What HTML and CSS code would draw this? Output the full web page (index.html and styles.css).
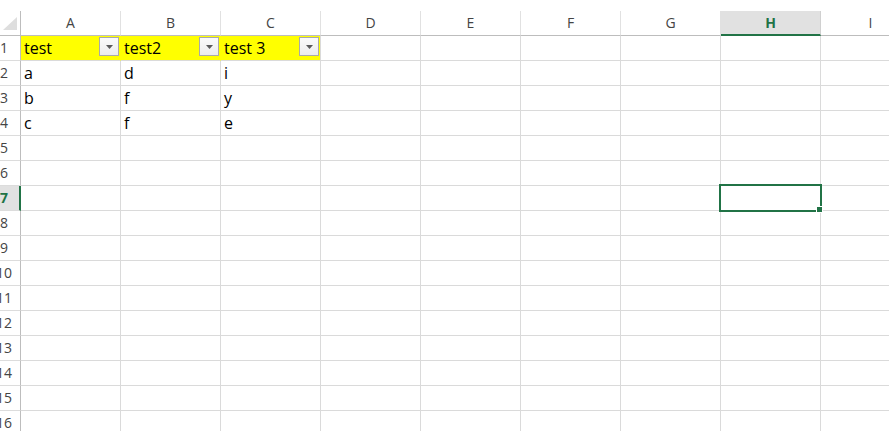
FILE: index.html
```html
<!DOCTYPE html>
<html>
<head>
<meta charset="utf-8">
<link rel="stylesheet" href="styles.css">
</head>
<body>
<div class="sheet">
  <div class="row head">
    <div class="rh corner"><svg width="20" height="24" viewBox="0 0 20 24"><polygon points="3,19 17,19 17,6" fill="#dedede"/></svg></div>
    <div class="ch">A</div><div class="ch">B</div><div class="ch">C</div><div class="ch">D</div><div class="ch">E</div><div class="ch">F</div><div class="ch">G</div><div class="ch sel">H</div><div class="ch">I</div>
  </div>
  <div class="row">
    <div class="rh"><span>1</span></div>
    <div class="c y f"><span class="t">test</span><span class="fb"><svg width="7" height="4" viewBox="0 0 7 4"><polygon points="0,0 7,0 3.5,4" fill="#5a5a5a"/></svg></span></div>
    <div class="c y f"><span class="t">test2</span><span class="fb"><svg width="7" height="4" viewBox="0 0 7 4"><polygon points="0,0 7,0 3.5,4" fill="#5a5a5a"/></svg></span></div>
    <div class="c y yl f"><span class="t">test 3</span><span class="fb"><svg width="7" height="4" viewBox="0 0 7 4"><polygon points="0,0 7,0 3.5,4" fill="#5a5a5a"/></svg></span></div>
    <div class="c"></div><div class="c"></div><div class="c"></div><div class="c"></div><div class="c"></div><div class="c"></div>
  </div>
  <div class="row">
    <div class="rh"><span>2</span></div>
    <div class="c">a</div><div class="c">d</div><div class="c">i</div>
    <div class="c"></div><div class="c"></div><div class="c"></div><div class="c"></div><div class="c"></div><div class="c"></div>
  </div>
  <div class="row">
    <div class="rh"><span>3</span></div>
    <div class="c">b</div><div class="c">f</div><div class="c">y</div>
    <div class="c"></div><div class="c"></div><div class="c"></div><div class="c"></div><div class="c"></div><div class="c"></div>
  </div>
  <div class="row">
    <div class="rh"><span>4</span></div>
    <div class="c">c</div><div class="c">f</div><div class="c">e</div>
    <div class="c"></div><div class="c"></div><div class="c"></div><div class="c"></div><div class="c"></div><div class="c"></div>
  </div>
  <div class="row">
    <div class="rh"><span>5</span></div>
    <div class="c"></div><div class="c"></div><div class="c"></div><div class="c"></div><div class="c"></div><div class="c"></div><div class="c"></div><div class="c"></div><div class="c"></div>
  </div>
  <div class="row">
    <div class="rh"><span>6</span></div>
    <div class="c"></div><div class="c"></div><div class="c"></div><div class="c"></div><div class="c"></div><div class="c"></div><div class="c"></div><div class="c"></div><div class="c"></div>
  </div>
  <div class="row">
    <div class="rh sel"><span>7</span></div>
    <div class="c"></div><div class="c"></div><div class="c"></div><div class="c"></div><div class="c"></div><div class="c"></div><div class="c"></div>
    <div class="c active"><div class="selbox"></div><div class="handle"></div></div>
    <div class="c"></div>
  </div>
  <div class="row">
    <div class="rh"><span>8</span></div>
    <div class="c"></div><div class="c"></div><div class="c"></div><div class="c"></div><div class="c"></div><div class="c"></div><div class="c"></div><div class="c"></div><div class="c"></div>
  </div>
  <div class="row">
    <div class="rh"><span>9</span></div>
    <div class="c"></div><div class="c"></div><div class="c"></div><div class="c"></div><div class="c"></div><div class="c"></div><div class="c"></div><div class="c"></div><div class="c"></div>
  </div>
  <div class="row">
    <div class="rh"><span>10</span></div>
    <div class="c"></div><div class="c"></div><div class="c"></div><div class="c"></div><div class="c"></div><div class="c"></div><div class="c"></div><div class="c"></div><div class="c"></div>
  </div>
  <div class="row">
    <div class="rh"><span>11</span></div>
    <div class="c"></div><div class="c"></div><div class="c"></div><div class="c"></div><div class="c"></div><div class="c"></div><div class="c"></div><div class="c"></div><div class="c"></div>
  </div>
  <div class="row">
    <div class="rh"><span>12</span></div>
    <div class="c"></div><div class="c"></div><div class="c"></div><div class="c"></div><div class="c"></div><div class="c"></div><div class="c"></div><div class="c"></div><div class="c"></div>
  </div>
  <div class="row">
    <div class="rh"><span>13</span></div>
    <div class="c"></div><div class="c"></div><div class="c"></div><div class="c"></div><div class="c"></div><div class="c"></div><div class="c"></div><div class="c"></div><div class="c"></div>
  </div>
  <div class="row">
    <div class="rh"><span>14</span></div>
    <div class="c"></div><div class="c"></div><div class="c"></div><div class="c"></div><div class="c"></div><div class="c"></div><div class="c"></div><div class="c"></div><div class="c"></div>
  </div>
  <div class="row">
    <div class="rh"><span>15</span></div>
    <div class="c"></div><div class="c"></div><div class="c"></div><div class="c"></div><div class="c"></div><div class="c"></div><div class="c"></div><div class="c"></div><div class="c"></div>
  </div>
  <div class="row">
    <div class="rh"><span>16</span></div>
    <div class="c"></div><div class="c"></div><div class="c"></div><div class="c"></div><div class="c"></div><div class="c"></div><div class="c"></div><div class="c"></div><div class="c"></div>
  </div>
</div>
</body>
</html>
```

FILE: styles.css
```css
html, body {
  margin: 0;
  padding: 0;
  background: #ffffff;
}
body {
  width: 889px;
  height: 431px;
  overflow: hidden;
}
.sheet {
  padding-top: 11px;
  width: 921px;
  font-family: "Open Sans", "Liberation Sans", sans-serif;
}
.row {
  display: flex;
  height: 25px;
}
.rh {
  flex: 0 0 21px;
  box-sizing: border-box;
  border-right: 1px solid #bdbdbd;
  border-bottom: 1px solid #dcdcdc;
  overflow: hidden;
  font-size: 14px;
  line-height: 24px;
  color: #444444;
}
.rh span {
  display: block;
  width: 32px;
  margin-left: -12px;
  text-align: center;
}
.rh.corner {
  border-bottom: 1px solid #bdbdbd;
}
.rh.corner svg {
  display: block;
}
.rh.sel {
  background: #e1e1e1;
  border-right: 2px solid #217346;
  color: #217346;
  font-weight: 700;
}
.ch {
  flex: 0 0 100px;
  box-sizing: border-box;
  border-right: 1px solid #e1e1e1;
  border-bottom: 1px solid #bdbdbd;
  text-align: center;
  font-size: 14px;
  line-height: 24px;
  color: #444444;
}
.ch.sel {
  background: #e1e1e1;
  border-right-color: #d0d0d0;
  border-bottom: 2px solid #217346;
  line-height: 23px;
  color: #217346;
  font-weight: 700;
}
.c {
  flex: 0 0 100px;
  box-sizing: border-box;
  border-right: 1px solid #dadada;
  border-bottom: 1px solid #dadada;
  padding-left: 3px;
  font-size: 16px;
  line-height: 24px;
  color: #000000;
  white-space: nowrap;
}
.c.y {
  background: #ffff00;
  border-right-color: #ffff00;
}
.c.y.yl {
  border-right-color: #dadada;
}
.c.f {
  display: flex;
  align-items: flex-start;
}
.c .t {
  flex: 1 1 auto;
}
.fb {
  flex: 0 0 20px;
  box-sizing: border-box;
  height: 19px;
  margin: 1px 1px 0 0;
  border: 1px solid #a9a9a9;
  background: linear-gradient(#fbfbfb, #ececec);
  display: flex;
  align-items: center;
  justify-content: center;
}
.fb svg {
  display: block;
  margin-top: 1px;
}
.c.active {
  position: relative;
}
.selbox {
  position: absolute;
  left: -2px;
  top: -2px;
  width: 103px;
  height: 28px;
  box-sizing: border-box;
  border: 2px solid #217346;
}
.handle {
  position: absolute;
  left: 95px;
  top: 20px;
  width: 7px;
  height: 7px;
  box-sizing: border-box;
  background: #217346;
  border: 1px solid #ffffff;
}
```
